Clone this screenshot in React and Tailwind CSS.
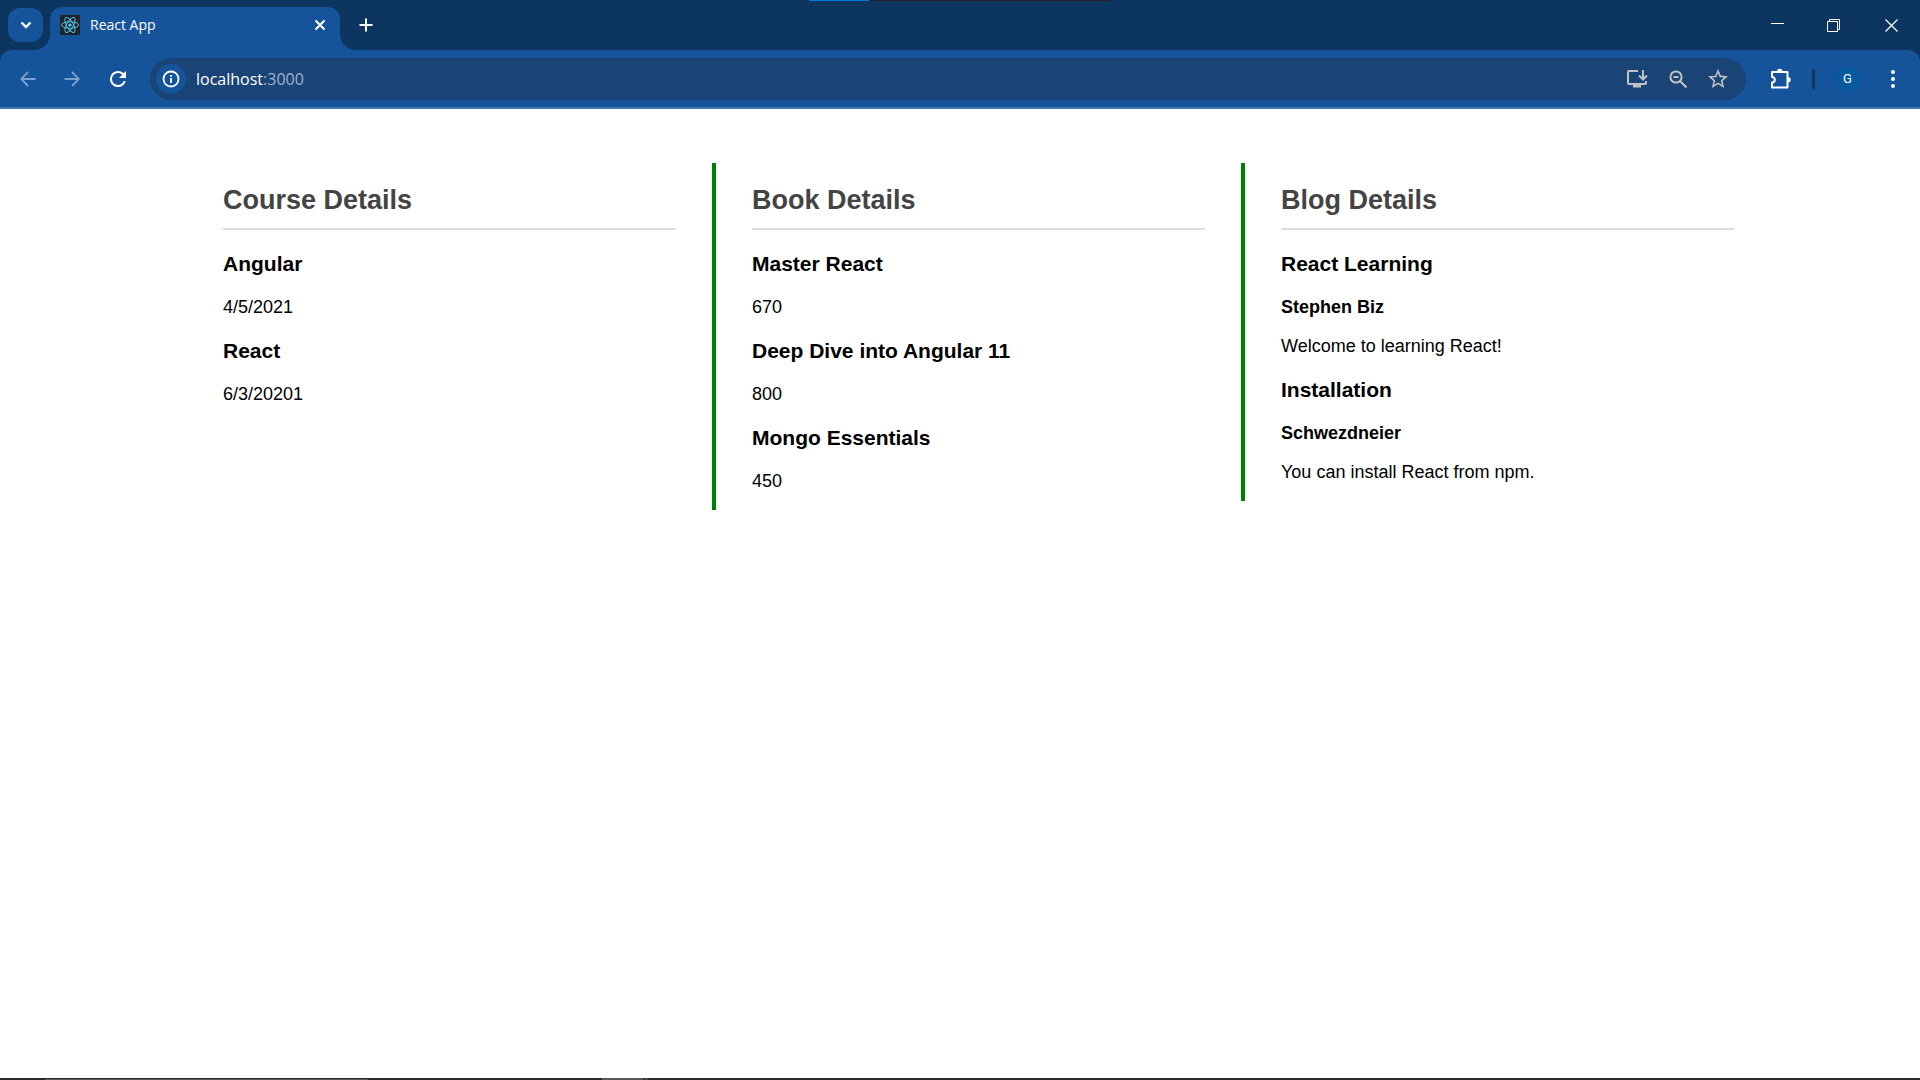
import React from "react";

const courses = [
  { id: 1, name: "Angular", date: "4/5/2021" },
  { id: 2, name: "React", date: "6/3/20201" },
];
const books = [
  { id: 1, name: "Master React", price: 670 },
  { id: 2, name: "Deep Dive into Angular 11", price: 800 },
  { id: 3, name: "Mongo Essentials", price: 450 },
];
const blogs = [
  { id: 1, title: "React Learning", author: "Stephen Biz", text: "Welcome to learning React!" },
  { id: 2, title: "Installation", author: "Schwezdneier", text: "You can install React from npm." },
];

const chromeFont = "font-['Open_Sans','Noto_Sans',sans-serif]";

function ReactLogo() {
  return (
    <svg width="20" height="20" viewBox="0 0 20 20" fill="none" aria-hidden="true">
      <rect width="20" height="20" rx="1" fill="#20232a" />
      <g stroke="#53c1de" strokeWidth="1">
        <ellipse cx="10" cy="10" rx="8.5" ry="3.3" />
        <ellipse cx="10" cy="10" rx="8.5" ry="3.3" transform="rotate(60 10 10)" />
        <ellipse cx="10" cy="10" rx="8.5" ry="3.3" transform="rotate(120 10 10)" />
      </g>
      <circle cx="10" cy="10" r="1.6" fill="#61dafb" />
    </svg>
  );
}

function TabStrip() {
  return (
    <div className="flex h-[50px] items-stretch bg-[#0c3560] text-white">
      <div className="flex w-[50px] shrink-0 bg-[#15539a]">
        <div className="flex w-full items-start rounded-br-2xl bg-[#0c3560] pt-2 pl-2">
          <button aria-label="Search tabs" className="flex h-[34px] w-[35px] items-center justify-center rounded-xl bg-[#15539a]">
            <svg width="12" height="8" viewBox="0 0 12 8" fill="none" stroke="currentColor" strokeWidth="2.4" aria-hidden="true">
              <path d="M1.5 1.5 6 6l4.500-4.500" />
            </svg>
          </button>
        </div>
      </div>
      <div className="flex w-[290px] shrink-0 bg-[#0c3560] pt-[7px]">
        <div className="flex w-full items-center rounded-t-xl bg-[#15539a] pr-3 pb-[7px] pl-[10px]">
          <ReactLogo />
          <span className="ml-[10px] flex-1 text-sm">React App</span>
          <button aria-label="Close tab" className="flex size-4 items-center justify-center">
            <svg width="12" height="12" viewBox="0 0 12 12" fill="none" stroke="currentColor" strokeWidth="2" aria-hidden="true">
              <path d="m1.500 1.500 9 9m0-9-9 9" />
            </svg>
          </button>
        </div>
      </div>
      <div className="flex flex-1 bg-[#15539a]">
        <div className="flex flex-1 justify-between rounded-bl-2xl bg-[#0c3560]">
          <button aria-label="New tab" className="flex w-[52px] items-center justify-center">
            <svg width="14" height="14" viewBox="0 0 14 14" fill="none" stroke="currentColor" strokeWidth="2" aria-hidden="true">
              <path d="M7 .5v13M.5 7h13" />
            </svg>
          </button>
          <div className="flex">
            <button aria-label="Minimize" className="flex w-14 items-center justify-center">
              <svg width="13" height="13" viewBox="0 0 13 13" stroke="currentColor" aria-hidden="true">
                <path d="M0 4.500h13" />
              </svg>
            </button>
            <button aria-label="Restore" className="flex w-[57px] items-center justify-center">
              <svg width="13" height="13" viewBox="0 0 13 13" fill="none" stroke="currentColor" aria-hidden="true">
                <path d="M.5 2.500h10v10H.5zM2.500 2.500v-2h10v10h-2" />
              </svg>
            </button>
            <button aria-label="Close" className="flex w-[58px] items-center justify-center">
              <svg width="13" height="13" viewBox="0 0 13 13" stroke="currentColor" strokeWidth="1.200" aria-hidden="true">
                <path d="m.5.5 12 12m0-12-12 12" />
              </svg>
            </button>
          </div>
        </div>
      </div>
    </div>
  );
}

function Toolbar() {
  return (
    <div className="bg-[#0c3560]">
      <div className="flex h-[59px] items-center rounded-t-xl border-b-2 border-[#4378b5] bg-[#15539a] text-white">
        <nav className="flex shrink-0 items-center">
          <button aria-label="Back" className="ml-[18px] flex size-5 items-center justify-center text-[#7d9fcb]">
            <svg width="16" height="16" viewBox="0 0 16 16" fill="none" stroke="currentColor" strokeWidth="1.800" aria-hidden="true">
              <path d="M15.500 8h-14M8 1 1.200 8 8 15" />
            </svg>
          </button>
          <button aria-label="Forward" className="ml-6 flex size-5 items-center justify-center text-[#7d9fcb]">
            <svg width="16" height="16" viewBox="0 0 16 16" fill="none" stroke="currentColor" strokeWidth="1.800" aria-hidden="true">
              <path d="M.5 8h14M8 1l6.800 7L8 15" />
            </svg>
          </button>
          <button aria-label="Reload" className="ml-[26px] flex size-5 items-center justify-center">
            <svg width="16" height="16" viewBox="4 4 16 16" fill="currentColor" aria-hidden="true">
              <path d="M17.650 6.350A7.950 7.950 0 0 0 12 4a8 8 0 1 0 7.730 10h-2.080A6 6 0 1 1 12 6c1.660 0 3.140.69 4.220 1.780L13 11h7V4z" />
            </svg>
          </button>
        </nav>
        <div className="ml-[22px] flex h-[42px] flex-1 items-center rounded-full bg-[#1a4475] pr-[18px] pl-[6px]">
          <button aria-label="Site information" className="flex size-[30px] items-center justify-center rounded-full bg-[#15539a]">
            <svg width="18" height="18" viewBox="0 0 18 18" fill="none" stroke="currentColor" strokeWidth="1.800" aria-hidden="true">
              <circle cx="9" cy="9" r="7.500" />
              <path d="M9 8v5M9 5v1.800" />
            </svg>
          </button>
          <a href="#" className="ml-[10px] flex-1 text-base text-white">
            localhost<span className="text-[#9fb2cc]">:3000</span>
          </a>
          <div className="flex items-center gap-5 text-[#c2c2c2]">
            <button aria-label="Install app">
              <svg width="22" height="20" viewBox="0 0 22 20" fill="none" stroke="currentColor" strokeWidth="2" aria-hidden="true">
                <path d="M12 2H3a1 1 0 0 0-1 1v11a1 1 0 0 0 1 1h16a1 1 0 0 0 1-1v-2M17 1v9M13 6.500l4 4 4-4" />
                <path d="M7 17h8" strokeWidth="3" />
              </svg>
            </button>
            <button aria-label="Zoom">
              <svg width="20" height="20" viewBox="0 0 20 20" fill="none" stroke="currentColor" strokeWidth="2" aria-hidden="true">
                <circle cx="8" cy="8" r="5.600" />
                <path d="m12 12 6.500 6.500M5.500 8h5" />
              </svg>
            </button>
            <button aria-label="Bookmark">
              <svg width="20" height="20" viewBox="2 2 20 20" fill="currentColor" aria-hidden="true">
                <path d="m22 9.240-7.190-.62L12 2 9.190 8.630 2 9.240l5.460 4.730L5.820 21 12 17.270 18.180 21l-1.630-7.030zM12 15.400l-3.760 2.270 1-4.280-3.320-2.880 4.380-.38L12 6.100l1.710 4.040 4.380.38-3.320 2.880 1 4.280z" />
              </svg>
            </button>
          </div>
        </div>
        <div className="flex shrink-0 items-center">
          <button aria-label="Extensions" className="ml-[24px]">
            <svg width="22" height="22" viewBox="0 0 22 22" fill="none" stroke="currentColor" strokeWidth="2" aria-hidden="true">
              <path d="M2 4h15.500v15.500H2v-5a2.800 2.800 0 0 0 0-5.600z" strokeLinejoin="round" />
              <path d="M7 3.500a2.700 2.700 0 0 1 5.400 0zM18 9a2.700 2.700 0 0 1 0 5.400z" fill="currentColor" stroke="none" />
            </svg>
          </button>
          <span className="ml-[20px] h-5 w-[3px] rounded bg-[#0c3560]" />
          <button aria-label="Profile" className="ml-[20px] flex size-[25px] items-center justify-center rounded-full bg-[#045a9d] font-['Roboto',sans-serif] text-[13px]">
            G
          </button>
          <button aria-label="Menu" className="mr-[17px] ml-[23px] flex size-5 items-center justify-center">
            <svg width="4" height="18" viewBox="0 0 4 18" fill="currentColor" aria-hidden="true">
              <circle cx="2" cy="2" r="2" />
              <circle cx="2" cy="9" r="2" />
              <circle cx="2" cy="16" r="2" />
            </svg>
          </button>
        </div>
      </div>
    </div>
  );
}

function Column({ title, children, first }) {
  return (
    <section className={first ? "pr-9 pb-[18px] pl-10" : "border-l-4 border-[#008000] pr-9 pb-[18px] pl-9"}>
      <h2 className="my-[22px] border-b-2 border-[#ddd] pb-3 text-[27px] leading-[31px] font-bold text-[#444]">{title}</h2>
      {children}
    </section>
  );
}

function ItemTitle({ children }) {
  return <h3 className="my-[21px] text-[21px] leading-6 font-bold">{children}</h3>;
}

export default function App() {
  return (
    <div className="flex min-h-screen flex-col bg-white">
      <header className={chromeFont}>
        <div className="relative">
          <TabStrip />
          <div className="absolute top-0 left-[809px] flex h-px w-[301px] bg-[#202020]">
            <span className="w-[60px] bg-[#0078d7]" />
          </div>
        </div>
        <Toolbar />
      </header>
      <main className="grid flex-1 grid-cols-3 items-start pt-[54px] pr-[150px] pl-[183px] font-['Liberation_Sans',Arial,sans-serif] text-lg leading-[21px] text-black">
        <Column title="Course Details" first>
          {courses.map((c) => (
            <div key={c.id}>
              <ItemTitle>{c.name}</ItemTitle>
              <p>{c.date}</p>
            </div>
          ))}
        </Column>
        <Column title="Book Details">
          {books.map((b) => (
            <div key={b.id}>
              <ItemTitle>{b.name}</ItemTitle>
              <p>{b.price}</p>
            </div>
          ))}
        </Column>
        <Column title="Blog Details">
          {blogs.map((b) => (
            <div key={b.id}>
              <ItemTitle>{b.title}</ItemTitle>
              <h4 className="font-bold">{b.author}</h4>
              <p className="mt-[18px]">{b.text}</p>
            </div>
          ))}
        </Column>
      </main>
      <footer className="flex h-0.5 items-end bg-[#2d2a2b]">
        <span className="ml-[45px] h-px w-[323px] bg-[#5a5858]" />
        <span className="ml-[234px] h-0.5 w-[41px] bg-[#585656]" />
        <span className="ml-px h-0.5 w-1 bg-[#454343]" />
      </footer>
    </div>
  );
}
